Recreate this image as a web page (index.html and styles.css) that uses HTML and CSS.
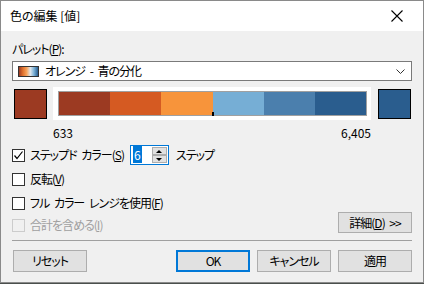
FILE: index.html
```html
<!DOCTYPE html>
<html lang="ja">
<head>
    <meta charset="UTF-8">
    <title>色の編集 [値]</title>
    <link rel="stylesheet" href="styles.css">
</head>
<body>

    <div class="dialog">
        <!-- Barre de titre -->
        <div class="titlebar">
            <span class="title">色の編集 [値]</span>
            <svg class="close" width="12" height="12" viewBox="0 0 12 12">
                <path d="M0.5 0.5 L11.5 11.5 M11.5 0.5 L0.5 11.5" stroke="#000" stroke-width="1.1" fill="none"/>
            </svg>
        </div>

        <div class="content">
            <div class="field-label">パレット(<u>P</u>):</div>
            <div class="combo">
                <span class="palette-icon"></span>
                <span class="combo-text">オレンジ - 青の分化</span>
                <svg class="chevron" width="9" height="5" viewBox="0 0 9 5">
                    <path d="M0.5 0.5 L4.5 4.5 L8.5 0.5" stroke="#333" stroke-width="1" fill="none"/>
                </svg>
            </div>

            <!-- Rampe de couleurs -->
            <div class="ramp">
                <div class="swatch swatch-start"></div>
                <div class="ramp-frame">
                    <div class="ramp-bar">
                        <span class="seg seg-1"></span>
                        <span class="seg seg-2"></span>
                        <span class="seg seg-3"></span>
                        <span class="seg seg-4"></span>
                        <span class="seg seg-5"></span>
                        <span class="seg seg-6"></span>
                    </div>
                    <span class="tick"></span>
                </div>
                <div class="swatch swatch-end"></div>
            </div>
            <div class="ramp-values">
                <span>633</span>
                <span>6,405</span>
            </div>

            <div class="check-row stepped">
                <span class="checkbox checked">
                    <svg width="11" height="11" viewBox="0 0 11 11">
                        <path d="M1.5 5.5 L4 8.5 L9.5 1.5" stroke="#000" stroke-width="1.2" fill="none"/>
                    </svg>
                </span>
                <span class="check-label">ステップド カラー(<u>S</u>)</span>
                <div class="spinbox">
                    <span class="spin-value"><span class="selected">6</span></span>
                    <span class="spin-buttons">
                        <span class="spin-up"></span>
                        <span class="spin-down"></span>
                    </span>
                </div>
                <span class="spin-unit">ステップ</span>
            </div>

            <div class="check-row">
                <span class="checkbox"></span>
                <span class="check-label">反転(<u>V</u>)</span>
            </div>

            <div class="check-row">
                <span class="checkbox"></span>
                <span class="check-label">フル カラー レンジを使用(<u>F</u>)</span>
            </div>

            <div class="check-row last-row">
                <span class="checkbox disabled"></span>
                <span class="check-label disabled">合計を含める(<u>I</u>)</span>
                <button class="btn btn-detail">詳細(<u>D</u>) &gt;&gt;</button>
            </div>

            <div class="separator"></div>

            <!-- Boutons du bas -->
            <div class="button-row">
                <button class="btn">リセット</button>
                <div class="button-group">
                    <button class="btn btn-default">OK</button>
                    <button class="btn">キャンセル</button>
                    <button class="btn">適用</button>
                </div>
            </div>
        </div>
    </div>

</body>
</html>
```

FILE: styles.css
```css
/* Police et fond de la page */
body {
    margin: 0;
    background-color: #4a4f4c;
    font-family: "Noto Sans CJK JP", "Noto Sans", sans-serif;
    font-size: 12px;
    color: #000;
    font-feature-settings: "palt";
}

u {
    text-decoration: underline;
    text-underline-offset: 1px;
}

/* Fenêtre du dialogue */
.dialog {
    width: 424px;
    height: 283px;
    box-sizing: border-box;
    border: 1px solid #8a8a8a;
    background-color: #f0f0f0;
}

.titlebar {
    height: 30px;
    background-color: #fff;
    display: flex;
    align-items: center;
    padding: 0 20px 0 9px;
}

.title {
    flex: 1;
    line-height: 16px;
}

.close {
    display: block;
}

.content {
    padding: 0 11px;
}

/* Les kana de l'interface Windows sont plus étroits */
.field-label,
.combo-text,
.check-label,
.spin-unit,
.btn {
    letter-spacing: -1px;
    word-spacing: 3px;
}

.field-label {
    margin-top: 10px;
    line-height: 16px;
}

/* Liste déroulante */
.combo {
    margin-top: 4px;
    height: 20px;
    box-sizing: border-box;
    border: 1px solid #7a7a7a;
    background-color: #fff;
    display: flex;
    align-items: center;
    padding: 0 6px 0 5px;
}

.palette-icon {
    width: 19px;
    height: 9px;
    border: 1px solid #333;
    background: linear-gradient(to right, #9c3a22, #e0702c, #f7a35a, #dfe6ec, #76aed5, #2a5d8e);
}

.combo-text {
    flex: 1;
    margin-left: 6px;
    line-height: 16px;
}

.chevron {
    display: block;
}

/* Rampe de couleurs */
.ramp {
    margin-top: 6px;
    height: 33px;
    display: flex;
    align-items: flex-start;
}

.swatch {
    width: 33px;
    height: 30px;
    box-sizing: border-box;
    border: 1px solid #000;
    margin-top: 2px;
}

.swatch-start {
    margin-left: 2px;
    background-color: #9c3a22;
}

.swatch-end {
    margin-left: 7px;
    background-color: #2a5d8e;
}

.ramp-frame {
    position: relative;
    width: 318px;
    height: 33px;
    box-sizing: border-box;
    margin-left: 6px;
    padding: 4px 4px 4px 5px;
    background-color: #fff;
}

.ramp-bar {
    height: 25px;
    box-sizing: border-box;
    border: 1px solid #a0a0a0;
    display: flex;
}

.seg {
    flex: 1;
}

.seg-1 { background-color: #9c3a22; }
.seg-2 { background-color: #d55a22; }
.seg-3 { background-color: #f7943b; }
.seg-4 { background-color: #76aed5; }
.seg-5 { background-color: #4b7fad; }
.seg-6 { background-color: #2a5d8e; }

.tick {
    position: absolute;
    left: 159px;
    top: 25px;
    width: 2px;
    height: 4px;
    background-color: #000;
}

.ramp-values {
    margin-top: 5px;
    height: 16px;
    line-height: 16px;
    display: flex;
    justify-content: space-between;
    padding: 0 41px;
}

/* Cases à cocher */
.check-row {
    height: 20px;
    margin-top: 4px;
    display: flex;
    align-items: center;
    white-space: nowrap;
}

.stepped {
    margin-top: 4px;
}

.checkbox {
    flex-shrink: 0;
    width: 13px;
    height: 13px;
    box-sizing: border-box;
    border: 1px solid #333;
    background-color: #fff;
    display: flex;
    align-items: center;
    justify-content: center;
}

.checkbox.disabled {
    border-color: #cccccc;
    background-color: #f0f0f0;
}

.check-label {
    margin-left: 5px;
    line-height: 16px;
}

.check-label.disabled {
    color: #a0a0a0;
}

/* Compteur */
.spinbox {
    flex-shrink: 0;
    margin-left: 6px;
    width: 39px;
    height: 20px;
    box-sizing: border-box;
    border: 1px solid #0078d7;
    background-color: #fff;
    display: flex;
}

.spin-value {
    flex: 1;
    padding: 2px 0 0 2px;
    line-height: 14px;
}

.selected {
    background-color: #0078d7;
    color: #fff;
    padding: 0 1px;
}

.spin-buttons {
    width: 15px;
    display: flex;
    flex-direction: column;
    padding: 1px;
}

.spin-up,
.spin-down {
    flex: 1;
    background-color: #e1e1e1;
    border: 1px solid #adadad;
    position: relative;
}

.spin-up::after,
.spin-down::after {
    content: "";
    position: absolute;
    left: 3px;
    border-left: 3px solid transparent;
    border-right: 3px solid transparent;
}

.spin-up::after {
    top: 2px;
    border-bottom: 3px solid #000;
}

.spin-down::after {
    top: 2px;
    border-top: 3px solid #000;
}

.spin-unit {
    margin-left: 7px;
    line-height: 16px;
}

.last-row {
    height: 21px;
    margin-top: -1px;
    align-items: flex-end;
}

.last-row .checkbox {
    margin-bottom: 1px;
}

.last-row .check-label {
    flex: 1;
}

/* Boutons */
.btn {
    width: 74px;
    height: 22px;
    box-sizing: border-box;
    border: 1px solid #adadad;
    background-color: #e1e1e1;
    font-family: inherit;
    font-size: 12px;
    color: #000;
    padding: 0;
    line-height: 16px;
    font-feature-settings: "palt";
}

.btn-detail {
    height: 21px;
}

.btn-default {
    border: 2px solid #0078d7;
}

.separator {
    margin-top: 7px;
    height: 1px;
    background-color: #a0a0a0;
}

.button-row {
    margin-top: 9px;
    display: flex;
    padding-left: 1px;
}

.button-group {
    margin-left: auto;
    display: flex;
    gap: 7px;
}
```
